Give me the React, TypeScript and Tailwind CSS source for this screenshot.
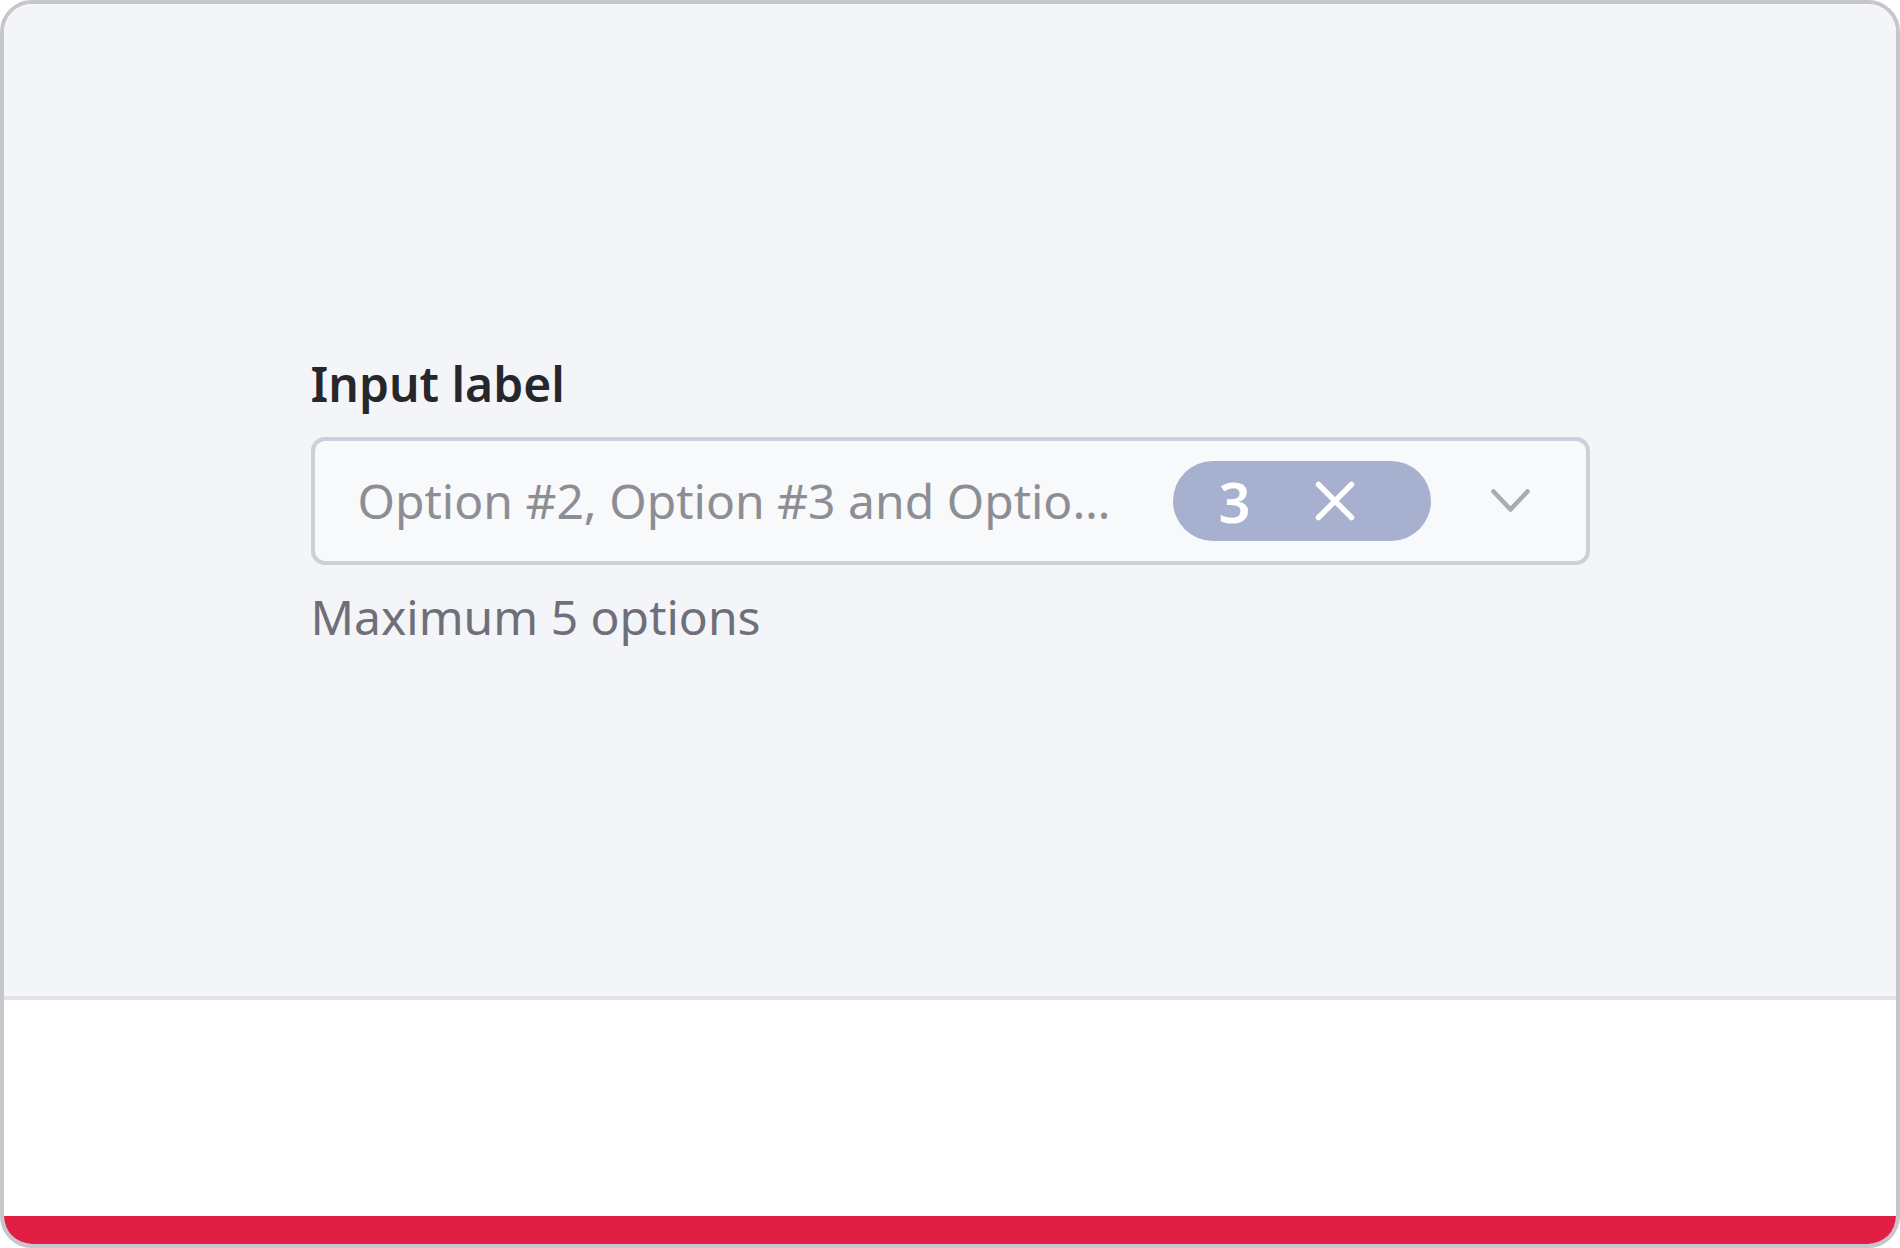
import React from 'react';

function ChevronDown() {
  return (
    <svg width="39" height="23" viewBox="0 0 39 23" fill="none">
      <path d="M2.5 2.5L19.5 20.5L36.5 2.5" stroke="#a9abb2" strokeWidth="4.5" strokeLinecap="round" strokeLinejoin="round" />
    </svg>
  );
}

function ClearIcon() {
  return (
    <svg width="40" height="40" viewBox="0 0 40 40" fill="none">
      <path d="M3.5 3.5L36.5 36.5M36.5 3.5L3.5 36.5" stroke="#ffffff" strokeWidth="5.5" strokeLinecap="round" />
    </svg>
  );
}

export default function App() {
  const selected = ['Option #2', 'Option #3', 'Option #4'];

  return (
    <div className="w-[1900px] h-[1248px] flex flex-col overflow-hidden rounded-[32px] border-4 border-[#c6c7cd] bg-white font-['Noto_Sans',sans-serif]">
      <div className="flex-1 flex items-center justify-center bg-[#f4f5f9] border-b-4 border-[#e3e4e8]">
        <div className="w-[1279px] flex flex-col">
          <label className="text-[48px] leading-[64px] font-semibold text-[#27272b]">Input label</label>

          <div className="mt-[21px] h-[128px] flex items-center rounded-[14px] border-4 border-[#cdcfda] bg-[#f8f9fb] pl-[43px] pr-[56px]">
            <span className="flex-1 min-w-0 truncate text-[48px] leading-[64px] text-[#8d8e93]">
              Option #2, Option #3 and Optio…
            </span>

            <div className="ml-[40px] w-[258px] h-[80px] flex items-center rounded-full bg-[#a7b1cf] pl-[46px]">
              <span className="text-[56px] leading-[64px] font-semibold text-white">{selected.length}</span>
              <button className="ml-auto mr-[76px] flex items-center justify-center">
                <ClearIcon />
              </button>
            </div>

            <div className="ml-[60px] flex items-center">
              <ChevronDown />
            </div>
          </div>

          <p className="mt-5 text-[48px] leading-[64px] text-[#6e6f78]">Maximum 5 options</p>
        </div>
      </div>
      <div className="h-[216px] bg-white" />
      <div className="h-[28px] bg-[#e11f45]" />
    </div>
  );
}
